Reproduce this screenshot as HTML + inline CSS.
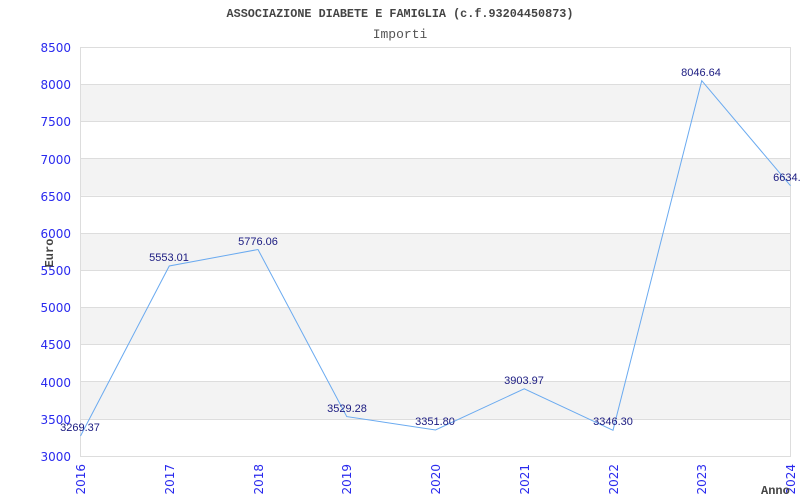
<!DOCTYPE html>
<html><head><meta charset="utf-8"><style>
html,body{margin:0;padding:0;background:#fff;width:800px;height:500px;overflow:hidden}
svg{display:block}
</style></head><body>
<svg width="800" height="500" xmlns="http://www.w3.org/2000/svg">
<rect width="800" height="500" fill="#fff"/>
<g fill="#f3f3f3">
<rect x="80.5" y="84.2" width="710" height="37.2"/>
<rect x="80.5" y="158.6" width="710" height="37.2"/>
<rect x="80.5" y="233" width="710" height="37.2"/>
<rect x="80.5" y="307.3" width="710" height="37.2"/>
<rect x="80.5" y="381.7" width="710" height="37.2"/>
</g>
<g stroke="#dddddd" stroke-width="1">
<line x1="80.5" y1="84.5" x2="790.5" y2="84.5"/>
<line x1="80.5" y1="121.5" x2="790.5" y2="121.5"/>
<line x1="80.5" y1="158.5" x2="790.5" y2="158.5"/>
<line x1="80.5" y1="196.5" x2="790.5" y2="196.5"/>
<line x1="80.5" y1="233.5" x2="790.5" y2="233.5"/>
<line x1="80.5" y1="270.5" x2="790.5" y2="270.5"/>
<line x1="80.5" y1="307.5" x2="790.5" y2="307.5"/>
<line x1="80.5" y1="344.5" x2="790.5" y2="344.5"/>
<line x1="80.5" y1="381.5" x2="790.5" y2="381.5"/>
<line x1="80.5" y1="419.5" x2="790.5" y2="419.5"/>
<rect x="80.5" y="47.5" width="710" height="409" fill="none"/>
</g>
<polyline fill="none" stroke="#6aaaf0" stroke-width="1" points="80.5,436 169.25,266 258,249.5 346.75,416.6 435.5,430 524.25,388.8 613,430.3 701.75,80.7 790.5,185.7"/>
<g font-family="Liberation Sans, sans-serif" font-size="11" fill="#1a1a80" text-anchor="middle">
<text x="80" y="431">3269.37</text>
<text x="169" y="261">5553.01</text>
<text x="258" y="245">5776.06</text>
<text x="347" y="412">3529.28</text>
<text x="435" y="425">3351.80</text>
<text x="524" y="384">3903.97</text>
<text x="613" y="425">3346.30</text>
<text x="701" y="76">8046.64</text>
<text x="790" y="181">6634.1</text>
</g>
<g font-family="DejaVu Sans, sans-serif" font-size="12" fill="#2a2aee" text-anchor="end">
<text x="71" y="52">8500</text>
<text x="71" y="89">8000</text>
<text x="71" y="126">7500</text>
<text x="71" y="164">7000</text>
<text x="71" y="201">6500</text>
<text x="71" y="238">6000</text>
<text x="71" y="275">5500</text>
<text x="71" y="312">5000</text>
<text x="71" y="349">4500</text>
<text x="71" y="387">4000</text>
<text x="71" y="424">3500</text>
<text x="71" y="461">3000</text>
</g>
<g font-family="DejaVu Sans, sans-serif" font-size="12" fill="#2a2aee" text-anchor="end">
<text transform="translate(85,464) rotate(-90)">2016</text>
<text transform="translate(174,464) rotate(-90)">2017</text>
<text transform="translate(263,464) rotate(-90)">2018</text>
<text transform="translate(351,464) rotate(-90)">2019</text>
<text transform="translate(440,464) rotate(-90)">2020</text>
<text transform="translate(529,464) rotate(-90)">2021</text>
<text transform="translate(618,464) rotate(-90)">2022</text>
<text transform="translate(706,464) rotate(-90)">2023</text>
<text transform="translate(795,464) rotate(-90)">2024</text>
</g>
<text x="400" y="17" text-anchor="middle" font-family="Liberation Mono, monospace" font-size="11.8" font-weight="bold" fill="#444">ASSOCIAZIONE DIABETE E FAMIGLIA (c.f.93204450873)</text>
<text x="400" y="38" text-anchor="middle" font-family="Liberation Mono, monospace" font-size="13" fill="#555">Importi</text>
<text transform="translate(53,253) rotate(-90)" text-anchor="middle" font-family="Liberation Mono, monospace" font-size="12" font-weight="bold" fill="#444">Euro</text>
<text x="761" y="494" font-family="Liberation Mono, monospace" font-size="12" font-weight="bold" fill="#444">Anno</text>
</svg>
</body></html>
